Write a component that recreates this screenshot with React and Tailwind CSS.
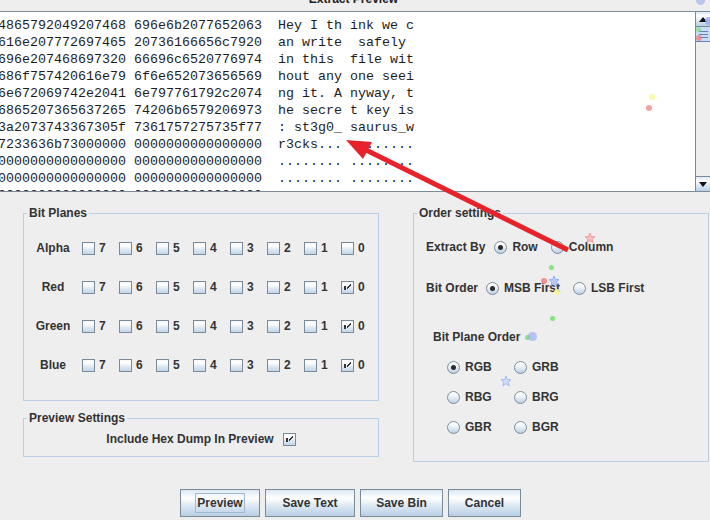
import React from "react";

const GRAD =
  "bg-[linear-gradient(to_bottom,#dde8f3_0%,#ffffff_30%,#dde8f3_60%,#b8cfe5_100%)]";

const lines = [
  ["4865792049207468", "696e6b2077652063", "Hey I th", "ink we c"],
  ["616e207772697465", "20736166656c7920", "an write", " safely "],
  ["696e207468697320", "66696c6520776974", "in this ", "file wit"],
  ["686f757420616e79", "6f6e652073656569", "hout any", "one seei"],
  ["6e672069742e2041", "6e797761792c2074", "ng it. A", "nyway, t"],
  ["6865207365637265", "74206b6579206973", "he secre", "t key is"],
  ["3a2073743367305f", "7361757275735f77", ": st3g0_", "saurus_w"],
  ["7233636b73000000", "0000000000000000", "r3cks...", "........"],
  ["0000000000000000", "0000000000000000", "........", "........"],
  ["0000000000000000", "0000000000000000", "........", "........"],
  ["0000000000000000", "0000000000000000", "........", "........"],
];

function CheckBox({ checked }) {
  return (
    <span
      className={`relative block w-[13px] h-[13px] shrink-0 border border-[#7a8a99] bg-[linear-gradient(to_bottom,#f4f7fb_0%,#ffffff_25%,#dde8f3_60%,#c3d6e9_100%)]`}
    >
      {checked && (
        <svg
          width="11"
          height="11"
          viewBox="1 1 11 11"
          className="absolute left-0 top-0"
          shapeRendering="crispEdges"
        >
          <rect x="3" y="5" width="2" height="4" fill="#333333" />
          <path d="M9.5 3.5 L5.5 7.5 M9.5 4.5 L5.5 8.5" stroke="#333333" strokeWidth="1" />
          <rect x="9" y="3" width="1" height="2" fill="#333333" />
        </svg>
      )}
    </span>
  );
}

function Radio({ checked }) {
  return (
    <span className="relative flex items-center justify-center w-[13px] h-[13px] shrink-0 rounded-full border border-[#7f8c99] bg-[linear-gradient(to_bottom,#ffffff_0%,#f2f6fa_35%,#d6e2ee_70%,#b8cfe5_100%)]">
      {checked && <span className="block w-[5px] h-[5px] rounded-full bg-[#2b2b2b]" />}
    </span>
  );
}

function GroupBox({ title, className, children }) {
  return (
    <div className={`border border-[#b8cfe5] ${className}`}>
      <div className="-mt-[8px] ml-[3px] px-[2px] w-fit bg-[#eeeeee] font-bold text-[12px] leading-[14px] text-[#333333]">
        {title}
      </div>
      {children}
    </div>
  );
}

function Button({ label, w, focused }) {
  return (
    <div
      className={`${w} h-[28px] border border-[#7a8a99] ${GRAD} flex items-center justify-center font-bold text-[12px] text-[#333333]`}
    >
      {focused ? (
        <span className="h-[20px] px-[1px] border border-[#a3b8cc] flex items-center leading-[14px]">
          {label}
        </span>
      ) : (
        <span className="leading-[14px]">{label}</span>
      )}
    </div>
  );
}

function Dot({ x, y, s, c }) {
  return (
    <span
      className="absolute rounded-full"
      style={{ left: x - s / 2, top: y - s / 2, width: s, height: s, background: c }}
    />
  );
}

function Star({ x, y, s, fill, stroke }) {
  return (
    <svg
      className="absolute"
      style={{ left: x - s / 2, top: y - s / 2 }}
      width={s}
      height={s}
      viewBox="0 0 24 24"
    >
      <path
        d="M12 2 L14.8 9 L22 9.3 L16.4 14 L18.3 21.5 L12 17.3 L5.7 21.5 L7.6 14 L2 9.3 L9.2 9 Z"
        fill={fill}
        stroke={stroke}
        strokeWidth="1.6"
        strokeLinejoin="round"
      />
    </svg>
  );
}

export default function App() {
  const bits = [7, 6, 5, 4, 3, 2, 1, 0];
  const planes = ["Alpha", "Red", "Green", "Blue"];
  return (
    <div className="relative w-[710px] h-[520px] overflow-hidden bg-[#eeeeee] font-['Liberation_Sans',Arial,sans-serif] text-[#333333]">
      {/* Title strip */}
      <div className="h-[11px] overflow-hidden flex justify-center">
        <div className="-mt-[8px] mr-[3px] font-bold text-[12px] leading-[14px] text-[#222222] whitespace-nowrap">
          Extract Preview
        </div>
      </div>

      {/* Text pane */}
      <div className="h-[181px] border-y border-[#7a8a99] bg-white flex">
        <div className="flex-1 overflow-hidden pt-[5px]">
          <pre className="-ml-[2px] font-['Liberation_Mono','Courier_New',monospace] text-[13.333px] leading-[17px] text-[#1e1e1e] whitespace-pre">
            {lines.map((l) => `${l[0]} ${l[1]}  ${l[2]} ${l[3]}`).join("\n")}
          </pre>
        </div>
        <div className="w-[15px] shrink-0 border-l border-[#7a8a99] bg-[#eeeeee] flex flex-col">
          <div className={`h-[15px] border-b border-[#7a8a99] ${GRAD} flex items-center justify-center`}>
            <svg width="8" height="5" viewBox="0 0 8 5">
              <path d="M0 5 L4 0 L8 5 Z" fill="#111111" />
            </svg>
          </div>
          <div className="h-[15px] border-b border-[#6382bf] bg-[#c8ddf2] flex flex-col justify-center gap-[2px] pl-[3px] pr-[2px]">
            <span className="block h-[1px] bg-[#6382bf]" />
            <span className="block h-[1px] bg-[#6382bf]" />
            <span className="block h-[1px] bg-[#6382bf]" />
          </div>
          <div className="flex-1" />
          <div className={`h-[15px] border-t border-[#7a8a99] ${GRAD} flex items-center justify-center`}>
            <svg width="8" height="5" viewBox="0 0 8 5">
              <path d="M0 0 L8 0 L4 5 Z" fill="#111111" />
            </svg>
          </div>
        </div>
      </div>

      {/* Settings */}
      <div className="pt-[21px] flex items-start">
        <div className="ml-[23px] w-[356px] flex flex-col">
          <GroupBox title="Bit Planes" className="h-[188px]">
            <div className="mt-[20px] flex flex-col gap-[22px]">
              {planes.map((p) => (
                <div key={p} className="h-[17px] flex items-center font-bold text-[12px] leading-[17px]">
                  <div className="w-[58px] text-center">{p}</div>
                  {bits.map((b) => (
                    <div key={b} className="w-[37px] flex items-center">
                      <CheckBox checked={b === 0 && p !== "Alpha"} />
                      <span className="ml-[4px]">{b}</span>
                    </div>
                  ))}
                </div>
              ))}
            </div>
          </GroupBox>
          <GroupBox title="Preview Settings" className="mt-[17px] h-[39px]">
            <div className="mt-[6px] h-[17px] flex items-center justify-center font-bold text-[12px] leading-[17px]">
              <span>Include Hex Dump In Preview</span>
              <span className="ml-[9px]">
                <CheckBox checked />
              </span>
            </div>
          </GroupBox>
        </div>

        <div className="ml-[34px] w-[296px]">
          <GroupBox title="Order settings" className="h-[249px]">
            <div className="font-bold text-[12px] leading-[17px]">
              <div className="mt-[19px] h-[17px] flex items-center pl-[12px]">
                <span>Extract By</span>
                <span className="ml-[9px]"><Radio checked /></span>
                <span className="ml-[5px]">Row</span>
                <span className="ml-[13px]"><Radio /></span>
                <span className="ml-[5px]">Column</span>
              </div>
              <div className="mt-[24px] h-[17px] flex items-center pl-[12px]">
                <span>Bit Order</span>
                <span className="ml-[8px]"><Radio checked /></span>
                <span className="ml-[5px]">MSB First</span>
                <span className="ml-[13px]"><Radio /></span>
                <span className="ml-[5px]">LSB First</span>
              </div>
              <div className="mt-[32px] h-[17px] flex items-center pl-[19px]">Bit Plane Order</div>
              <div className="mt-[13px] pl-[33px] grid grid-cols-[67px_67px] gap-y-[13px]">
                {[
                  ["RGB", true],
                  ["GRB", false],
                  ["RBG", false],
                  ["BRG", false],
                  ["GBR", false],
                  ["BGR", false],
                ].map(([t, c]) => (
                  <div key={t} className="h-[17px] flex items-center">
                    <Radio checked={c} />
                    <span className="ml-[5px]">{t}</span>
                  </div>
                ))}
              </div>
            </div>
          </GroupBox>
        </div>
      </div>

      {/* Buttons */}
      <div className="mt-[27px] pl-[180px] flex gap-[5px]">
        <Button label="Preview" w="w-[80px]" focused />
        <Button label="Save Text" w="w-[90px]" />
        <Button label="Save Bin" w="w-[83px]" />
        <Button label="Cancel" w="w-[73px]" />
      </div>

      {/* Cursor sparkles */}
      <Dot x={700} y={0} s={9} c="rgba(150,170,240,0.6)" />
      <Dot x={709} y={21} s={8} c="rgba(140,160,245,0.7)" />
      <Dot x={698} y={29} s={5} c="rgba(120,220,120,0.6)" />
      <Dot x={699} y={38} s={6} c="rgba(240,120,120,0.7)" />
      <Dot x={652} y={97} s={6} c="rgba(250,250,150,0.8)" />
      <Dot x={649} y={108} s={6} c="rgba(240,130,130,0.75)" />
      <Star x={590} y={238} s={12} fill="rgba(250,170,170,0.7)" stroke="rgba(240,130,130,0.8)" />
      <Dot x={551} y={267} s={5} c="rgba(110,220,110,0.8)" />
      <Dot x={544} y={281} s={6} c="rgba(240,120,120,0.8)" />
      <Star x={554} y={281} s={12} fill="rgba(160,180,250,0.6)" stroke="rgba(120,150,250,0.8)" />
      <Dot x={557} y={292} s={6} c="rgba(250,250,150,0.9)" />
      <Dot x={552} y={318} s={5} c="rgba(110,220,110,0.8)" />
      <Dot x={527} y={337} s={5} c="rgba(110,220,110,0.8)" />
      <Dot x={532} y={336} s={9} c="rgba(150,170,245,0.65)" />
      <Star x={506} y={381} s={12} fill="rgba(190,205,255,0.6)" stroke="rgba(140,165,250,0.8)" />

      {/* Red annotation arrow */}
      <svg className="absolute left-0 top-0 pointer-events-none" width="710" height="520">
        <line x1="366" y1="150" x2="568" y2="250" stroke="#e8222b" strokeWidth="5" />
        <polygon points="346,140 372,142 363,159" fill="#e8222b" />
      </svg>
    </div>
  );
}
